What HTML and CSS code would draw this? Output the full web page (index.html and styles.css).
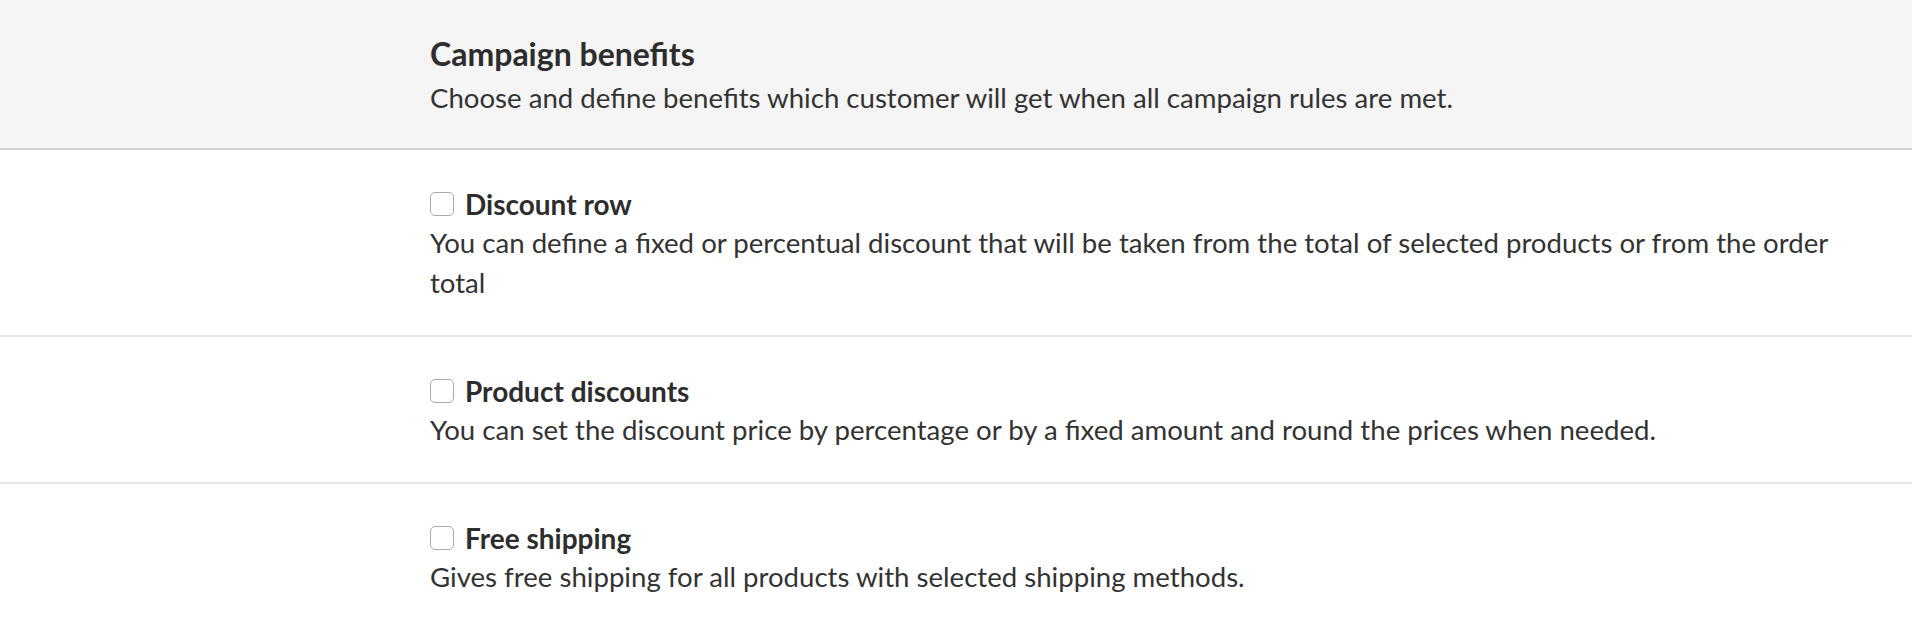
FILE: index.html
```html
<!DOCTYPE html>
<html lang="en">
<head>
<meta charset="utf-8">
<title>Campaign benefits</title>
<link rel="stylesheet" href="styles.css">
</head>
<body>
<div class="page">
  <header class="section-head">
    <h1 class="section-title">Campaign benefits</h1>
    <p class="section-desc">Choose and define benefits which customer will get when all campaign rules are met.</p>
  </header>
  <section class="benefit">
    <label class="benefit-title"><input type="checkbox" class="benefit-check"><span>Discount row</span></label>
    <p class="benefit-desc">You can define a fixed or percentual discount that will be taken from the total of selected products or from the order total</p>
  </section>
  <section class="benefit">
    <label class="benefit-title"><input type="checkbox" class="benefit-check"><span>Product discounts</span></label>
    <p class="benefit-desc">You can set the discount price by percentage or by a fixed amount and round the prices when needed.</p>
  </section>
  <section class="benefit last">
    <label class="benefit-title"><input type="checkbox" class="benefit-check"><span>Free shipping</span></label>
    <p class="benefit-desc">Gives free shipping for all products with selected shipping methods.</p>
  </section>
</div>
</body>
</html>
```
FILE: styles.css
```css
* { box-sizing: border-box; }
html, body {
  margin: 0;
  padding: 0;
  background: #ffffff;
  font-family: Lato, "Open Sans", sans-serif;
  color: #333333;
}
.page {
  width: 100%;
}
.section-head {
  background: #f5f5f5;
  border-bottom: 2px solid #d2d2d2;
  padding: 36px 60px 30px 430px;
}
.section-title {
  margin: 0;
  font-size: 32px;
  line-height: 36px;
  font-weight: 700;
  color: #2d2d2d;
}
.section-desc {
  margin: 6px 0 0;
  font-size: 27.6px;
  line-height: 40px;
}
.benefit {
  border-bottom: 2px solid #e8e8e8;
  padding: 36px 60px 32px 430px;
}
.benefit.last {
  border-bottom: none;
}
.benefit-title {
  display: flex;
  align-items: center;
  gap: 11px;
  height: 36px;
  font-size: 28px;
  font-weight: 700;
  color: #2d2d2d;
}
.benefit-check {
  appearance: none;
  -webkit-appearance: none;
  margin: 0;
  width: 24px;
  height: 24px;
  border: 1px solid #aaaaaa;
  border-radius: 5px;
  background: #ffffff;
  flex: none;
}
.benefit-desc {
  margin: 1px 0 0;
  font-size: 27.6px;
  line-height: 40px;
}
```
